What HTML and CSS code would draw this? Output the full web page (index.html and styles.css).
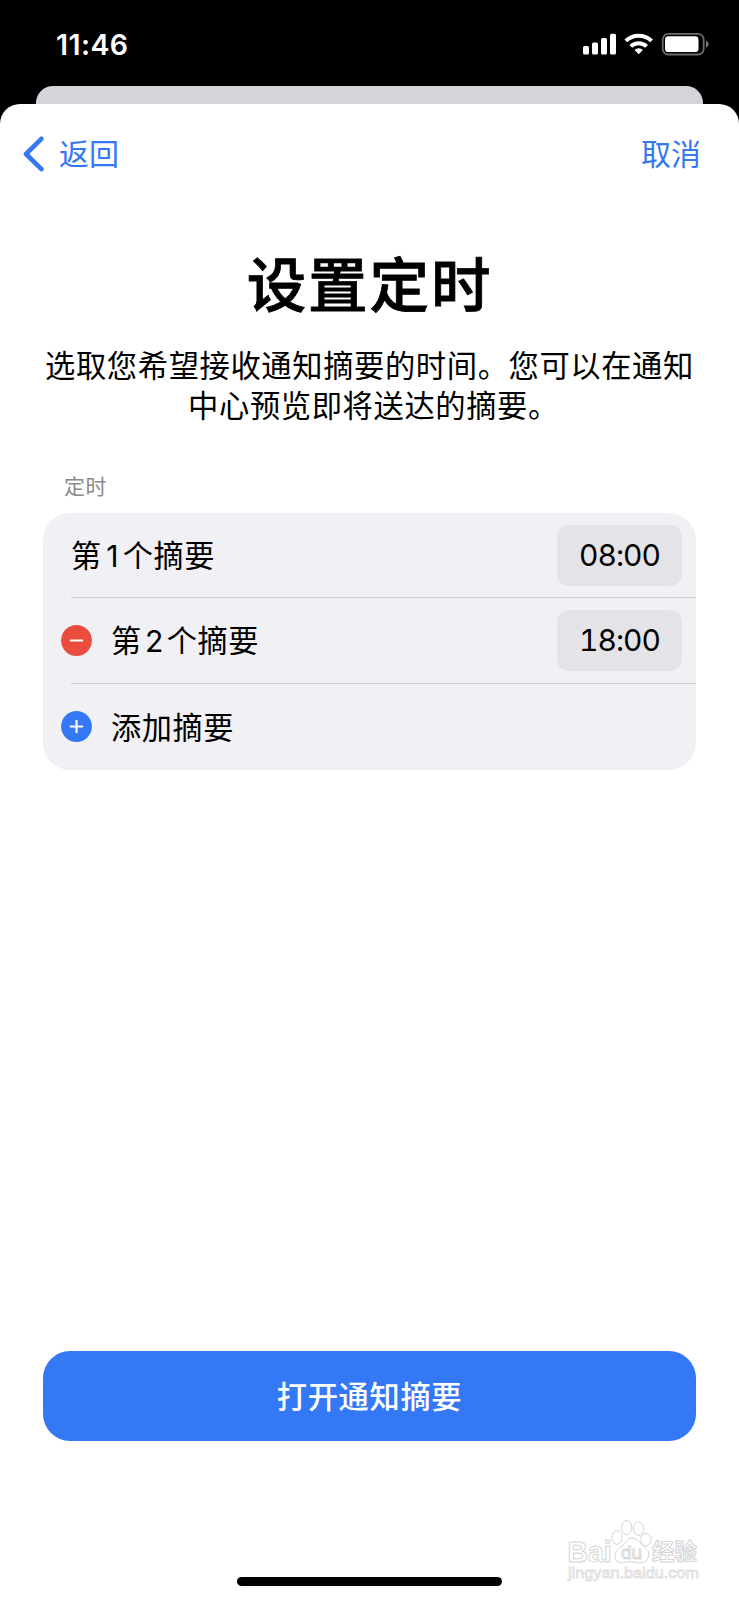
FILE: index.html
```html
<!DOCTYPE html>
<html lang="zh-CN">
<head>
<meta charset="utf-8">
<title>设置定时</title>
<link rel="stylesheet" href="styles.css">
</head>
<body>
<div class="screen">
  <header class="status">
    <span class="clock">11:46</span>
    <svg class="status-icons" width="128" height="26" viewBox="0 0 128 26">
      <g fill="#fff">
        <rect x="1" y="14" width="6" height="8.5" rx="1.5"/>
        <rect x="10" y="10.5" width="6" height="12" rx="1.5"/>
        <rect x="19" y="6" width="6" height="16.5" rx="1.5"/>
        <rect x="28" y="1.7" width="6" height="20.8" rx="1.5"/>
        <path d="M56.7 22.2l-4.2-4.2a6.2 6.2 0 0 1 8.4 0z"/>
      </g>
      <g fill="none" stroke="#fff" stroke-width="4">
        <path d="M48.8 14.4a11.5 11.5 0 0 1 15.8 0"/>
        <path d="M43.8 8.9a18.6 18.6 0 0 1 25.8 0"/>
      </g>
      <rect x="80.7" y="1.9" width="41" height="20.6" rx="5.6" fill="none" stroke="#6b6b6b" stroke-width="1.8"/>
      <rect x="83" y="4.3" width="33.5" height="15.8" rx="3.4" fill="#fff"/>
      <path d="M124 8.5q2.6 1.2 2.6 3.6t-2.6 3.8z" fill="#777"/>
    </svg>
  </header>
  <div class="back-sheet"></div>
  <main class="sheet">
    <nav class="nav">
      <a class="back">
        <svg width="22" height="36" viewBox="0 0 22 36"><path d="M18.4 2.8L3 18l15.4 15.2" fill="none" stroke="#3478f6" stroke-width="4.6" stroke-linecap="round" stroke-linejoin="round"/></svg>
        <span>返回</span>
      </a>
      <a class="cancel">取消</a>
    </nav>
    <h1 class="title">设置定时</h1>
    <p class="intro"><span>选取您希望接收通知摘要的时间。您可以在通知</span><span class="second">中心预览即将送达的摘要。</span></p>
    <h2 class="caption">定时</h2>
    <section class="card">
      <div class="row">
        <span class="label">第<span class="num one">1</span>个摘要</span>
        <span class="time">08:00</span>
      </div>
      <div class="row">
        <svg class="icon" width="31" height="31" viewBox="0 0 31 31"><circle cx="15.5" cy="15.5" r="15.4" fill="#ea4d3d"/><path d="M9.8 15.5h11.4" stroke="#fff" stroke-width="2.2" stroke-linecap="round"/></svg>
        <span class="label">第<span class="num two">2</span>个摘要</span>
        <span class="time">18:00</span>
      </div>
      <div class="row">
        <svg class="icon" width="31" height="31" viewBox="0 0 31 31"><circle cx="15.5" cy="15.5" r="15.4" fill="#3478f6"/><path d="M9.8 15.5h11.4M15.5 9.8v11.4" stroke="#fff" stroke-width="2.2" stroke-linecap="round"/></svg>
        <span class="label">添加摘要</span>
      </div>
    </section>
    <button class="submit">打开通知摘要</button>
    <div class="home"></div>
  </main>
  <svg class="watermark" width="140" height="70" viewBox="0 0 140 70">
    <g fill="#fff" stroke="#d4d4d4" stroke-width="1">
      <text class="wm-latin" x="0.5" y="44.5" font-size="30" textLength="44" lengthAdjust="spacingAndGlyphs">Bai</text>
      <text class="wm-cjk" x="85" y="43" font-size="22.5" textLength="45">经验</text>
      <ellipse cx="50" cy="20.5" rx="5.2" ry="6.8"/>
      <ellipse cx="59.7" cy="10.6" rx="5.2" ry="7"/>
      <ellipse cx="71.6" cy="11.6" rx="5.2" ry="6.8"/>
      <ellipse cx="79" cy="22.5" rx="5.2" ry="6.2"/>
      <path d="M65 21c6 0 8 6 12 9s6 6 4 11-7 5.5-12 4.5-7-.8-11 0-10 0-10-6 4-8 8-11 4-7.5 9-7.5z"/>
      <text class="wm-thin" x="54" y="42" font-size="19" textLength="21">du</text>
    </g>
    <text class="wm-url" x="1" y="61" font-size="15" textLength="131" lengthAdjust="spacingAndGlyphs">jingyan.baidu.com</text>
  </svg>
</div>
</body>
</html>
```
FILE: styles.css
```css
* { box-sizing: border-box; }
body {
  margin: 0;
  background: #000;
  font-family: "Noto Sans CJK SC", sans-serif;
  color: #000;
}
.screen {
  position: relative;
  width: 739px;
  height: 1600px;
  overflow: hidden;
  display: flex;
  flex-direction: column;
  background: #000;
}
.status {
  height: 86px;
  flex: none;
  display: flex;
  justify-content: space-between;
  align-items: flex-start;
  padding: 32px 29px 0 56px;
}
.clock {
  color: #fff;
  font: 600 28.5px/26px Inter, sans-serif;
  letter-spacing: .4px;
}
.back-sheet {
  flex: none;
  height: 17.5px;
  margin: 0 36px;
  border-radius: 17px 17px 0 0;
  background: #d5d4da;
}
.sheet {
  flex: 1;
  display: flex;
  flex-direction: column;
  background: #fff;
  border-radius: 20px 20px 0 0;
}
.nav {
  display: flex;
  justify-content: space-between;
  height: 100px;
  padding: 26px 38px 0 23px;
  color: #3478f6;
  font-size: 30px;
  line-height: 44px;
}
.back { display: flex; gap: 14px; }
.back svg { margin-top: 6px; }
.title {
  margin: 32px 0 0;
  text-align: center;
  font-size: 59.5px;
  line-height: 90px;
  font-weight: 500;
  -webkit-text-stroke: .8px #000;
  letter-spacing: 1.9px;
}
.intro {
  display: flex;
  flex-direction: column;
  align-items: center;
  margin: 18.5px 0 0;
  font-size: 30.3px;
  line-height: 40px;
  letter-spacing: .6px;
  white-space: nowrap;
}
.second { padding-left: 8px; }
.caption {
  margin: 45.5px 0 0 64px;
  font-size: 21px;
  letter-spacing: .5px;
  line-height: 30px;
  font-weight: 400;
  color: #8a8a8e;
}
.card {
  margin: 13px 43px 0;
  height: 257px;
  border-radius: 27px;
  background: #f1f0f5;
  display: grid;
  grid-template-rows: repeat(3, 1fr);
}
.row {
  display: flex;
  align-items: center;
  padding: 0 14px 0 28px;
  background: linear-gradient(#cfced3, #cfced3) 28px 100% / 100% 1px no-repeat;
}
.row:last-child { background: none; }
.icon { margin: 0 19px 0 -10px; }
.label {
  font-size: 30.2px;
  line-height: 44px;
  letter-spacing: .6px;
  padding-bottom: 1px;
}
.num { display: inline-block; font-family: Inter, sans-serif; text-align: center; letter-spacing: 0; }
.one { width: 21px; }
.two { width: 25px; }
.time {
  margin-left: auto;
  width: 125px;
  height: 61px;
  border-radius: 12px;
  background: #e4e3e8;
  font: 400 30px/61px Inter, sans-serif;
  font-variant-numeric: tabular-nums;
  letter-spacing: -1px;
  text-align: center;
}
.submit {
  margin: 581.5px 43px 0;
  height: 90px;
  padding: 0 0 2px;
  border: 0;
  border-radius: 27px;
  background: #3478f6;
  color: #fff;
  font: 500 30.3px/44px "Noto Sans CJK SC", sans-serif;
  letter-spacing: .6px;
}
.home {
  width: 265px;
  height: 9px;
  margin: auto auto 14px 237px;
  border-radius: 5px;
  background: #000;
}
.watermark { position: absolute; left: 567px; top: 1517px; }
.wm-latin { font-family: "Liberation Sans", sans-serif; font-weight: 700; }
.wm-thin { font-family: "Liberation Sans", sans-serif; }
.wm-cjk { font-family: "Noto Sans CJK SC", sans-serif; font-weight: 700; }
.wm-url { font-family: "Liberation Sans", sans-serif; fill: #fff; stroke: #dcdcdc; stroke-width: .8px; }
```
